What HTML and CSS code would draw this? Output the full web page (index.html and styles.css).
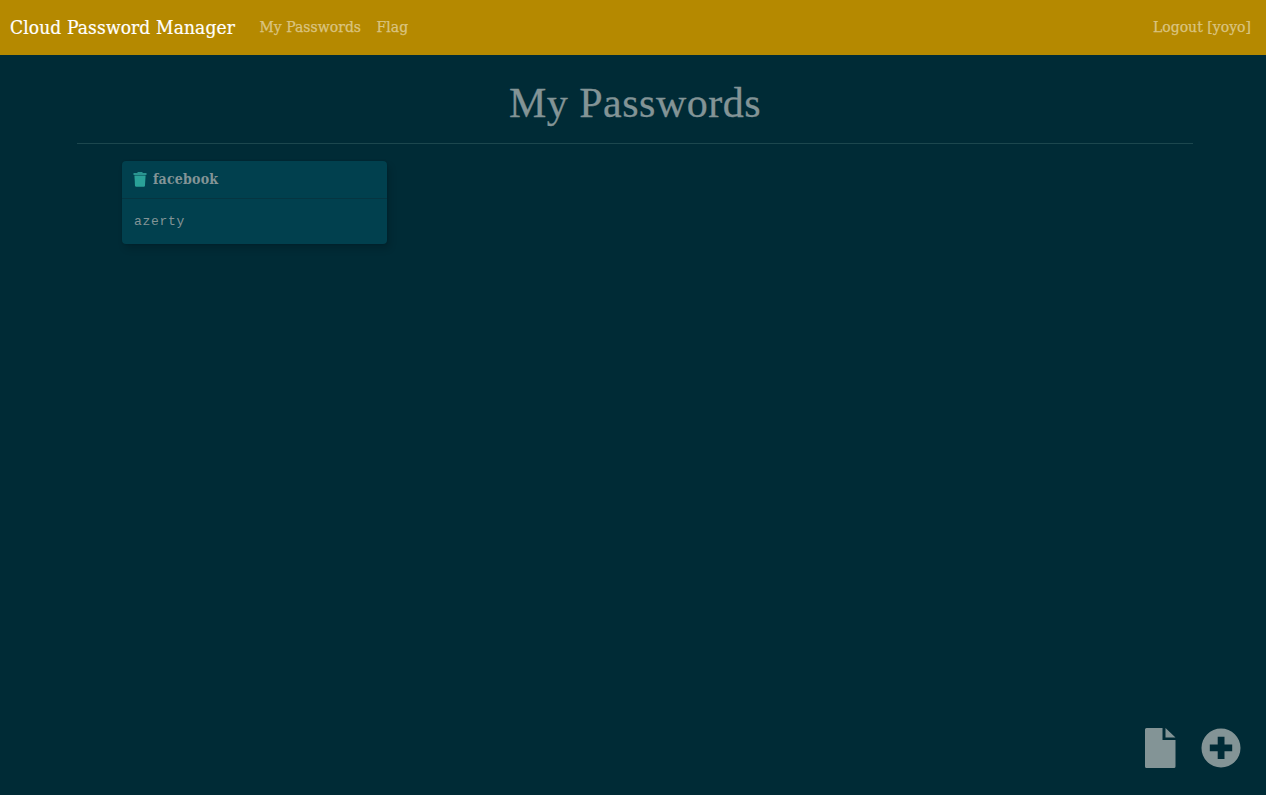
FILE: index.html
```html
<!DOCTYPE html>
<html lang="en">
<head>
<meta charset="utf-8">
<title>Cloud Password Manager</title>
<link rel="stylesheet" href="styles.css">
</head>
<body>
<nav class="navbar">
  <a class="brand">Cloud Password Manager</a>
  <a class="nav-link">My Passwords</a>
  <a class="nav-link">Flag</a>
  <a class="nav-link logout">Logout [yoyo]</a>
</nav>
<main class="container">
  <h1 class="title">My Passwords</h1>
  <div class="cards">
    <section class="card">
      <header class="card-header">
        <svg class="trash" width="14" height="15" viewBox="0 0 14 15"><path d="M4.500 0h5v1h4v2H.5V1h4z" fill="#2a9490"/><path d="M1.400 3.500h11.200l-.6 10q-.1 1.200-1.200 1.200H3.200q-1.100 0-1.200-1.200z"/></svg>
        <span class="card-name">facebook</span>
      </header>
      <div class="card-body">azerty</div>
    </section>
  </div>
</main>
<div class="actions">
  <svg class="action" width="31" height="40" viewBox="0 0 31 40"><path d="M1.500 0H17.500v12h13v26.500q0 1.500-1.500 1.500H1.500Q0 40 0 38.500v-37Q0 0 1.500 0zM20.500 0l10 9.500H20.500z"/></svg>
  <svg class="action" width="40" height="40" viewBox="0 0 40 40"><path fill-rule="evenodd" d="M20 .5a19.500 19.500 0 1 0 0 39 19.500 19.500 0 0 0 0-39zM16.700 8.800h6.800v7.800h7.700v6.700h-7.700v7.700h-6.800v-7.700H8.800v-6.700h7.900z"/></svg>
</div>
</body>
</html>
```
FILE: styles.css
```css
* { box-sizing: border-box; }
body {
  margin: 0;
  height: 795px;
  display: flex;
  flex-direction: column;
  overflow: hidden;
  background: #002b36;
  color: #839496;
  font-family: "Liberation Serif", serif;
}
.navbar {
  height: 55px;
  flex: none;
  display: flex;
  align-items: center;
  padding: 0 15px 2px 10px;
  background: #b58900;
  font-family: "DejaVu Serif Condensed", "DejaVu Serif", serif;
  font-stretch: condensed;
}
.brand {
  width: 249.500px;
  font-size: 19px;
  letter-spacing: .13px;
  white-space: nowrap;
  color: #fff;
  -webkit-text-stroke: .2px #fff;
}
.nav-link {
  margin-right: 15.500px;
  font-size: 15.500px;
  letter-spacing: .05px;
  white-space: nowrap;
  color: #dac480;
  -webkit-text-stroke: .25px #dac480;
}
.logout { margin: 0 0 0 auto; }
.container { width: 1116px; margin-left: 77px; flex: 1; }
.title {
  height: 89px;
  margin: 0;
  padding-top: 23px;
  border-bottom: 1px solid #1c474e;
  font-size: 42px;
  line-height: 50px;
  font-weight: 400;
  letter-spacing: .5px;
  text-align: center;
  -webkit-text-stroke: .3px #839496;
}
.cards { display: flex; padding: 17px 45px; }
.card {
  width: 265px;
  height: 83px;
  border-radius: 4px;
  background: #01404e;
  box-shadow: 3px 5px 7px rgba(0, 0, 0, .15), 0 0 2px rgba(0, 0, 0, .2);
}
.card-header {
  height: 38px;
  display: flex;
  align-items: center;
  gap: 6px;
  padding: 0 0 1px 11px;
  border-bottom: 1px solid #063541;
}
.trash { fill: #2aa198; }
.card-name {
  font-family: "DejaVu Serif Condensed", "DejaVu Serif", serif;
  font-stretch: condensed;
  font-size: 14px;
  font-weight: 700;
  letter-spacing: .2px;
}
.card-body {
  padding: 14px 12px;
  font-family: "Liberation Mono", monospace;
  font-size: 13px;
  line-height: 18px;
  letter-spacing: .7px;
}
.actions {
  display: flex;
  justify-content: flex-end;
  gap: 25px;
  padding: 0 25px 27px 0;
}
.action { fill: #839496; }
```
